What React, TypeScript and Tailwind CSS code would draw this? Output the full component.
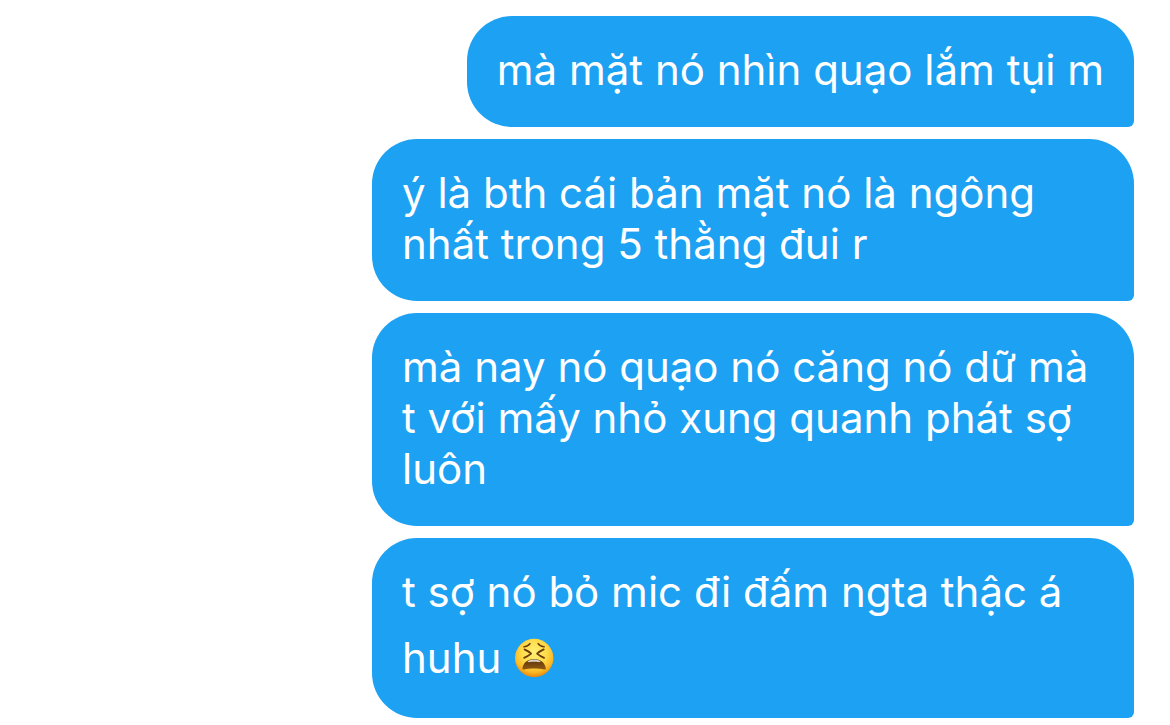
import type { ReactNode } from "react";

function WearyFace() {
  return (
    <svg
      viewBox="0 0 40 40"
      role="img"
      aria-label="tired face"
      className="mx-px mt-[21px] mb-2 inline-block size-10 align-[-13px]"
    >
      <defs>
        <radialGradient id="face" cx="50%" cy="36%" r="64%">
          <stop offset="0" stopColor="#fff176" />
          <stop offset="0.5" stopColor="#fedc4b" />
          <stop offset="0.8" stopColor="#fbb925" />
          <stop offset="1" stopColor="#ea850a" />
        </radialGradient>
        <linearGradient id="mouth" x1="0" y1="0" x2="0" y2="1">
          <stop offset="0" stopColor="#5c3207" />
          <stop offset="1" stopColor="#8f5a14" />
        </linearGradient>
      </defs>
      <circle cx="20.2" cy="20" r="19.2" fill="url(#face)" />
      <g fill="none" stroke="#6b3a08" strokeLinecap="round" strokeLinejoin="round">
        <path d="M9.7 8.800c2.600-.2 5.100-1.500 6.400-3.300M24 5.500c1.300 1.800 3.800 3.100 6.400 3.300" strokeWidth="1.300" />
        <path d="M10.500 11.400c2.400 1.100 4.700 2.500 6.600 4.200-2 1.700-4.400 3.200-7 4.200M29.700 11.400c-2.400 1.100-4.700 2.500-6.600 4.200 2 1.700 4.400 3.200 7 4.200" strokeWidth="1.800" />
      </g>
      <path d="M8.400 30.100c.9-5.400 5.400-9.100 11.700-9.100s10.800 3.700 11.700 9.100c.2 1.200-.7 1.700-1.700 1.400-6-1.400-14-1.400-20 0-1 .3-1.900-.2-1.700-1.400Z" fill="url(#mouth)" />
      <path d="M13.500 23.400c1.800-1.200 4-1.800 6.600-1.800s4.800.6 6.600 1.800c-.5.700-1.400.9-2.500.7-2.700-.4-5.500-.4-8.200 0-1.100.2-2 0-2.500-.7Z" fill="#ddd0c4" />
    </svg>
  );
}

function Bubble({ children }: { children: ReactNode }) {
  return (
    <li className="max-w-[762px] rounded-[45px] rounded-br-[6px] bg-[#1da1f2] px-[30px] pt-7 pb-8">
      <p>{children}</p>
    </li>
  );
}

export default function App() {
  return (
    <main className="min-h-screen bg-white font-['Inter',sans-serif] text-[42px] leading-[51px] text-white">
      <ul className="flex flex-col items-end gap-3 px-9 pt-4">
        <Bubble>mà mặt nó nhìn quạo lắm tụi m</Bubble>
        <Bubble>ý là bth cái bản mặt nó là ngông nhất trong 5 thằng đui r</Bubble>
        <Bubble>mà nay nó quạo nó căng nó dữ mà t với mấy nhỏ xung quanh phát sợ luôn</Bubble>
        <Bubble>
          t sợ nó bỏ mic đi đấm ngta thậc á huhu <WearyFace />
        </Bubble>
      </ul>
    </main>
  );
}
